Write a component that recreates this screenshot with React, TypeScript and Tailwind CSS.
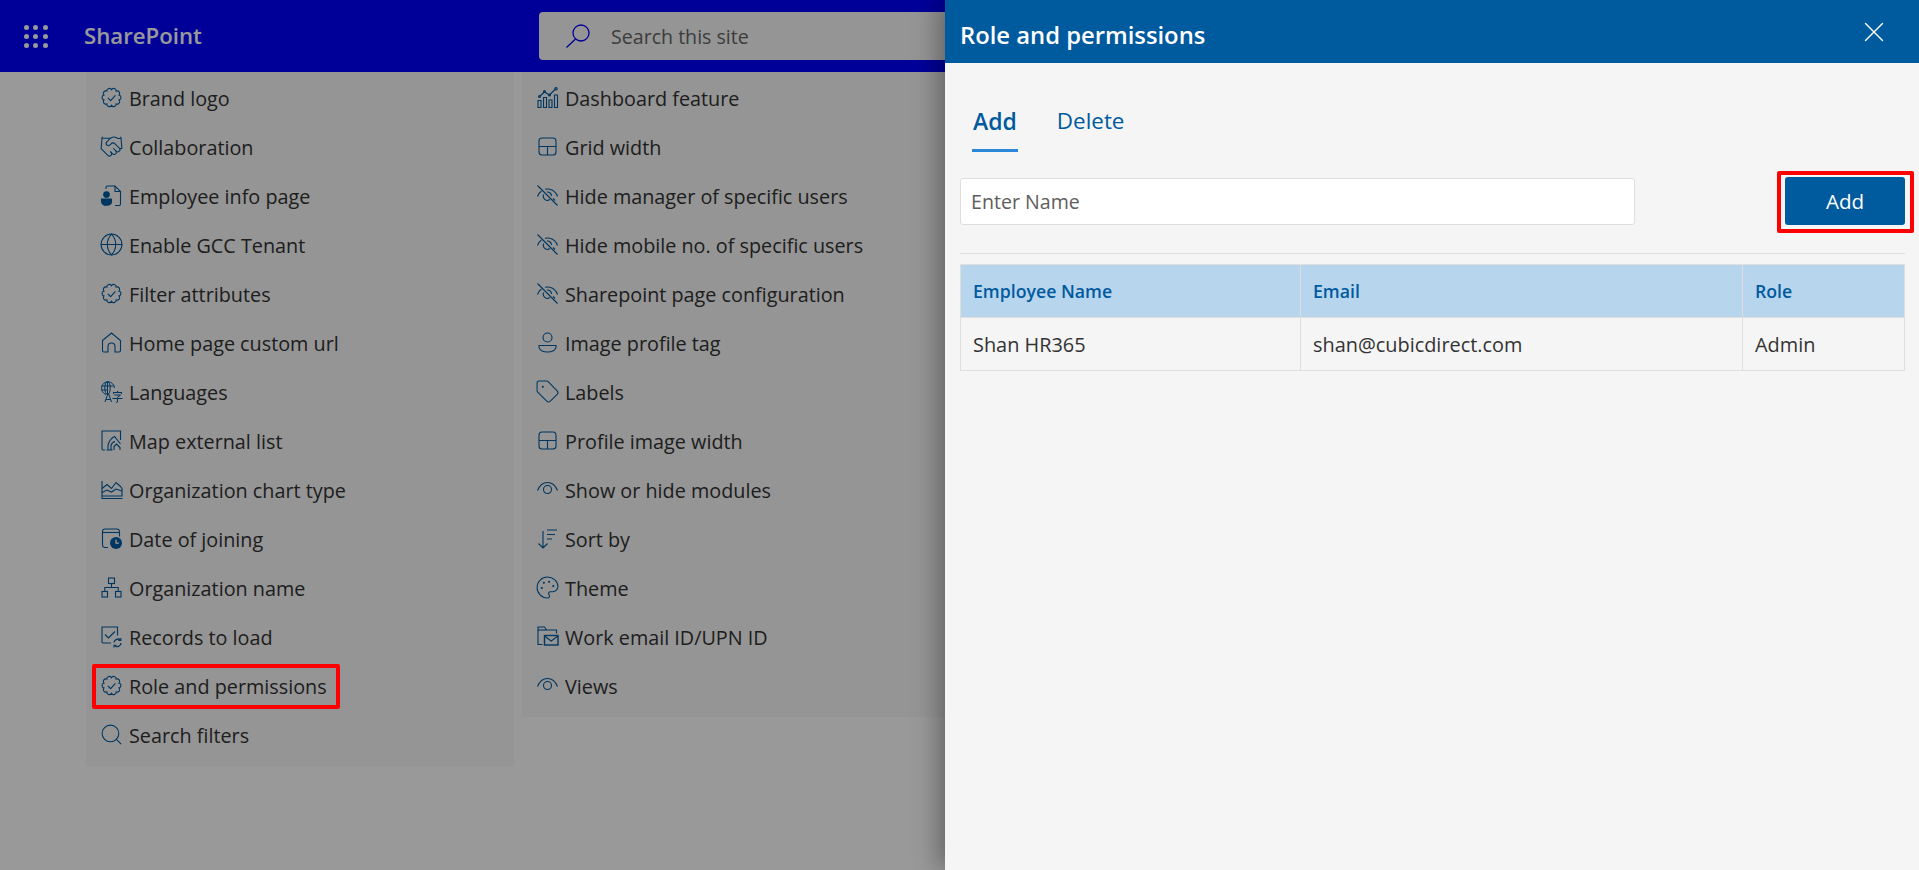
import React from 'react'
import { Globe, Handshake, Palette, Search, Tag, X } from 'lucide-react'

const Svg = ({ children }: { children: React.ReactNode }) => (
    <svg viewBox="0 0 21 21" fill="none" stroke="currentColor" strokeWidth="1.100" className="w-[21px] h-[21px] shrink-0 overflow-visible">
        {children}
    </svg>
)

const big = 'w-[25px] h-[25px] shrink-0 -mx-[2px]'

// scalloped outline, same one for every "settings" row
const scallops = (() => {
    const n = 10
    const r = 7.900
    let d = ''
    for (let i = 0; i <= n; i++) {
        const a = (i / n) * Math.PI * 2 - Math.PI / 2
        const x = (10.500 + r * Math.cos(a)).toFixed(2)
        const y = (10.500 + r * Math.sin(a)).toFixed(2)
        d += i === 0 ? `M${x} ${y}` : `A2.500 2.500 0 0 1 ${x} ${y}`
    }
    return d + 'z'
})()

const BadgeIcon = () => (
    <Svg>
        <path d={scallops} />
        <path d="m6.800 10.800 2.800 2.800 4.800-5.200" />
    </Svg>
)

const EmployeeIcon = () => (
    <Svg>
        <path d="M5 4V2.500A1.500 1.500 0 0 1 6.500 1H14l5.500 5.500v12.500a1.500 1.500 0 0 1-1.500 1.500h-4" />
        <path d="M14 1v5.500h5.500" />
        <circle cx="5.500" cy="9.500" r="2.800" fill="currentColor" />
        <path d="M0.500 14h10v2.500c0 2.200-2 3.800-5 3.800s-5-1.600-5-3.800z" fill="currentColor" />
    </Svg>
)

const HomeIcon = () => (
    <Svg>
        <path d="M1.500 8.500 10.500 1l9 7.500v10a1.500 1.500 0 0 1-1.500 1.500h-4v-5.500a3.500 3.500 0 0 0-7 0V20H3a1.500 1.500 0 0 1-1.500-1.500z" />
    </Svg>
)

const LanguageIcon = () => (
    <Svg>
        <path d="M5 13.500a6.500 6.500 0 1 1 8.500-6.500" strokeWidth="1" />
        <ellipse cx="6.500" cy="7" rx="2.700" ry="6.500" strokeWidth="1" />
        <path d="M0.500 5h12M0.500 9h6M6.500 0.500V13" strokeWidth="1" />
        <path d="M4 21 7 12.500h.5L10.500 21M5 18.500h4.500" strokeWidth="1" />
        <path d="M12 11.500h9M12.500 11.500v1.500M20.500 11.500v1.500M16.500 10v1.500M13.500 14h6l-3 2.500V21l-1.500.5M11.500 17.500h10" strokeWidth="1" />
    </Svg>
)

const MapListIcon = () => (
    <Svg>
        <path d="M4 20H2a1 1 0 0 1-1-1V1h18.500v9" />
        <path d="M7 20v-5M5.500 20h6M7 15c1.500-5 4-7.500 6.500-8.500l6 7.500" />
        <path d="M10 20v-4.500c.5-2 2-3.500 4-4" />
        <path d="M13 20v-3.500l2.500-2.500 3.500 3.500V20" />
    </Svg>
)

const AreaIcon = () => (
    <Svg>
        <path d="M1 2v17.500h20.500" />
        <path d="M1 9.500 6 5.500l4.500 4 4.500-6 4 3.500 2 2.500v7.500H1" />
        <path d="M1 13.500 6 11l4.500 2 4.500-3 6 2" />
    </Svg>
)

const DateIcon = () => (
    <Svg>
        <path d="M7 19.500H3.500A2.500 2.500 0 0 1 1.500 17V3.500A2.500 2.500 0 0 1 4 1h12a2.500 2.500 0 0 1 2.500 2.500v5" />
        <path d="M1.500 4.500h17" />
        <circle cx="15" cy="15" r="6" fill="currentColor" stroke="none" />
        <path d="M15 11.500v3.700h3" stroke="#f8f8f8" strokeWidth="1.300" />
    </Svg>
)

const OrgIcon = () => (
    <Svg>
        <rect x="7.500" y="1" width="6" height="5.500" />
        <rect x="1" y="14.500" width="5.500" height="5.500" />
        <rect x="14.500" y="14.500" width="5.500" height="5.500" />
        <path d="M10.500 6.500V10.500M3.800 14.500V10.500H17.200V14.500" />
    </Svg>
)

const RecordsIcon = () => (
    <Svg>
        <path d="M10 17H2a1 1 0 0 1-1-1V1h15.500v8.500" />
        <path d="m4 8.500 3.500 3.500 6.500-6.500" />
        <path d="M13 16.500a3.800 3.800 0 0 1 6.500-2.300M20 17a3.800 3.800 0 0 1-6.500 2.500" strokeWidth="1.300" />
        <path d="M19.800 12v2.500h-2.500M13 21.500v-2.300h2.500" />
    </Svg>
)

const DashboardIcon = () => (
    <Svg>
        <path d="M1 20.500v-7h3v7zM6.500 20.500V10.500h3v10zM12 20.500V13h3v7.500zM17.500 20.500V8h3v12.500z" />
        <path d="M2.500 9.500 7.500 5l5 3L18.500 2" />
        <circle cx="2.500" cy="9.500" r="1" />
        <circle cx="7.500" cy="4.500" r="1" />
        <circle cx="12.500" cy="8" r="1" />
        <circle cx="19" cy="1.800" r="1.200" />
    </Svg>
)

const GridIcon = () => (
    <Svg>
        <rect x="2" y="2" width="17" height="17" rx="3" />
        <path d="M2 10.500h17M10.500 10.500V19" />
    </Svg>
)

const EyeOffIcon = () => (
    <Svg>
        <path d="m0.500 0.500 20 20" />
        <path d="M0.500 11.500C1.500 9 3 7 4.500 6M8 4.300c1.700-.5 3.300-.5 5 0 3.500.9 6.300 3.700 7.500 7.200M18 15.500l-2-2" />
        <path d="M6.800 9.500a4 4 0 0 0 6 5M10 7a4 4 0 0 1 4.500 4" />
    </Svg>
)

const ProfileIcon = () => (
    <Svg>
        <circle cx="10.500" cy="5.500" r="4.500" />
        <path d="M2 13.500h17v1.800c0 2.700-4 4.700-8.500 4.700S2 18 2 15.300z" />
    </Svg>
)

const EyeIcon = () => (
    <Svg>
        <path d="M0.500 11.500C2.500 6.500 6.300 3.500 10.500 3.500s8 3 10 8" />
        <circle cx="10.500" cy="10.500" r="4" />
    </Svg>
)

const SortIcon = () => (
    <Svg>
        <path d="M6 3v17M1.500 15.500 6 20l4.500-4.500" />
        <path d="M10 2h10M10 6.500h8M10 11h5" />
    </Svg>
)

const WorkEmailIcon = () => (
    <Svg>
        <path d="M5.500 18.500H1V1h6.500l2 3h10v3.500" />
        <path d="M1 4h8.500" />
        <rect x="7.500" y="9.500" width="13.500" height="9.500" strokeWidth="1.400" />
        <path d="m7.500 10 6.700 5 6.800-5" />
    </Svg>
)

const columnOne = [
    { label: 'Brand logo', icon: <BadgeIcon /> },
    { label: 'Collaboration', icon: <Handshake className={big} strokeWidth={1} /> },
    { label: 'Employee info page', icon: <EmployeeIcon /> },
    { label: 'Enable GCC Tenant', icon: <Globe className={big} strokeWidth={1} /> },
    { label: 'Filter attributes', icon: <BadgeIcon /> },
    { label: 'Home page custom url', icon: <HomeIcon /> },
    { label: 'Languages', icon: <LanguageIcon /> },
    { label: 'Map external list', icon: <MapListIcon /> },
    { label: 'Organization chart type', icon: <AreaIcon /> },
    { label: 'Date of joining', icon: <DateIcon /> },
    { label: 'Organization name', icon: <OrgIcon /> },
    { label: 'Records to load', icon: <RecordsIcon /> },
    { label: 'Role and permissions', icon: <BadgeIcon /> },
    { label: 'Search filters', icon: <Search className={big} strokeWidth={1} /> },
]

const columnTwo = [
    { label: 'Dashboard feature', icon: <DashboardIcon /> },
    { label: 'Grid width', icon: <GridIcon /> },
    { label: 'Hide manager of specific users', icon: <EyeOffIcon /> },
    { label: 'Hide mobile no. of specific users', icon: <EyeOffIcon /> },
    { label: 'Sharepoint page configuration', icon: <EyeOffIcon /> },
    { label: 'Image profile tag', icon: <ProfileIcon /> },
    { label: 'Labels', icon: <Tag className={big} strokeWidth={1} /> },
    { label: 'Profile image width', icon: <GridIcon /> },
    { label: 'Show or hide modules', icon: <EyeIcon /> },
    { label: 'Sort by', icon: <SortIcon /> },
    { label: 'Theme', icon: <Palette className={big} strokeWidth={1} /> },
    { label: 'Work email ID/UPN ID', icon: <WorkEmailIcon /> },
    { label: 'Views', icon: <EyeIcon /> },
]

const SettingsColumn = ({ items, width }: { items: typeof columnOne; width: string }) => (
    <div className={`${width} bg-[#f8f8f8] pt-[2px] pb-[6px] pl-[15px]`}>
        {items.map((item) => (
            <div key={item.label} className="h-[49px] flex items-center gap-[8px] text-[#333333]">
                <span className="text-[#005a9e] flex -mt-[3px]">{item.icon}</span>
                <span className="text-[19.8px] leading-[24px] whitespace-nowrap -ml-[1px]">{item.label}</span>
            </div>
        ))}
    </div>
)

const App = () => {
    return (
        <div className="relative w-full h-[870px] overflow-hidden bg-white font-['Open_Sans',sans-serif]">
            <header className="h-[72px] bg-[#0000ff] flex items-center">
                <div className="ml-[24px] w-[24px] grid grid-cols-3 gap-[4px]">
                    {Array.from({ length: 9 }).map((_, i) => (
                        <span key={i} className="w-[5px] h-[5px] rounded-full bg-white" />
                    ))}
                </div>
                <span className="ml-[36px] w-[455px] text-white text-[22.2px] font-semibold">SharePoint</span>
                <div className="w-[800px] h-[48px] rounded-[4px] bg-[#f8f8f8] flex items-center pl-[27px] gap-[21px]">
                    <svg viewBox="0 0 24 24" fill="none" stroke="#0000ff" strokeWidth="1.300" className="w-[24px] h-[24px]">
                        <circle cx="15" cy="9" r="8" />
                        <path d="M9.500 15 0.500 23.500" />
                    </svg>
                    <span className="text-[19.6px] text-[#666666] pt-[1px]">Search this site</span>
                </div>
            </header>

            <main className="flex items-start gap-[8px] pl-[86px]">
                <SettingsColumn items={columnOne} width="w-[428px]" />
                <SettingsColumn items={columnTwo} width="w-[430px]" />
            </main>

            <div className="absolute inset-0 bg-black/40" />

            {/* annotation sits above the dimming layer */}
            <div className="absolute left-[92px] top-[664px] w-[248px] h-[45px] border-[4px] border-[#ff0000] rounded-[2px]" />

            <aside className="absolute top-0 right-0 bottom-0 w-[974px] bg-[#f5f5f5] shadow-[-6px_0_24px_rgba(0,0,0,0.35)]">
                <div className="h-[63px] bg-[#005a9e] flex items-center justify-between pl-[15px] pr-[28px]">
                    <h1 className="text-white text-[23.8px] font-semibold pt-[8px]">Role and permissions</h1>
                    <X className="w-[34px] h-[34px] text-white" strokeWidth={1} />
                </div>

                <div className="pl-[15px] pr-[14px]">
                    <div className="flex gap-[39px] pl-[12px] pt-[41px]">
                        <div className="h-[48px] border-b-[3px] border-[#2b88d8] text-[#005a9e] text-[23px] font-semibold px-[1px]">Add</div>
                        <div className="text-[#005a9e] text-[22.400px]">Delete</div>
                    </div>

                    <div className="flex items-center justify-between mt-[25px] h-[48px]">
                        <div className="w-[675px] h-[47px] bg-white border border-[#dedede] rounded-[3px] flex items-center pl-[10px] pt-[1px] text-[19.6px] text-[#605e5c]">
                            Enter Name
                        </div>
                        <div className="relative w-[120px] h-[48px] bg-[#005a9e] rounded-[3px] flex items-center justify-center text-white text-[20.6px]">
                            Add
                            <div className="absolute left-[-8px] top-[-6px] w-[137px] h-[62px] border-[4px] border-[#ff0000] rounded-[2px]" />
                        </div>
                    </div>

                    <div className="h-px bg-[#dedede] mt-[28px]" />

                    <table className="mt-[10px] w-[945px] table-fixed border-collapse">
                        <thead>
                            <tr className="h-[53px] bg-[#b8d5ee] text-[#005a9e] text-[17.7px]">
                                <th className="w-[340px] border border-[#dedede] text-left font-semibold pl-[12px] pt-[1px]">Employee Name</th>
                                <th className="w-[442px] border border-[#dedede] text-left font-semibold pl-[12px] pt-[1px]">Email</th>
                                <th className="border border-[#dedede] text-left font-semibold pl-[12px] pt-[1px]">Role</th>
                            </tr>
                        </thead>
                        <tbody>
                            <tr className="h-[53px] text-[#333333] text-[19.9px]">
                                <td className="border border-[#dedede] pl-[12px] pt-[2px]">Shan HR365</td>
                                <td className="border border-[#dedede] pl-[12px] pt-[2px]">shan@cubicdirect.com</td>
                                <td className="border border-[#dedede] pl-[12px] pt-[2px]">Admin</td>
                            </tr>
                        </tbody>
                    </table>
                </div>
            </aside>
        </div>
    )
}

export default App
